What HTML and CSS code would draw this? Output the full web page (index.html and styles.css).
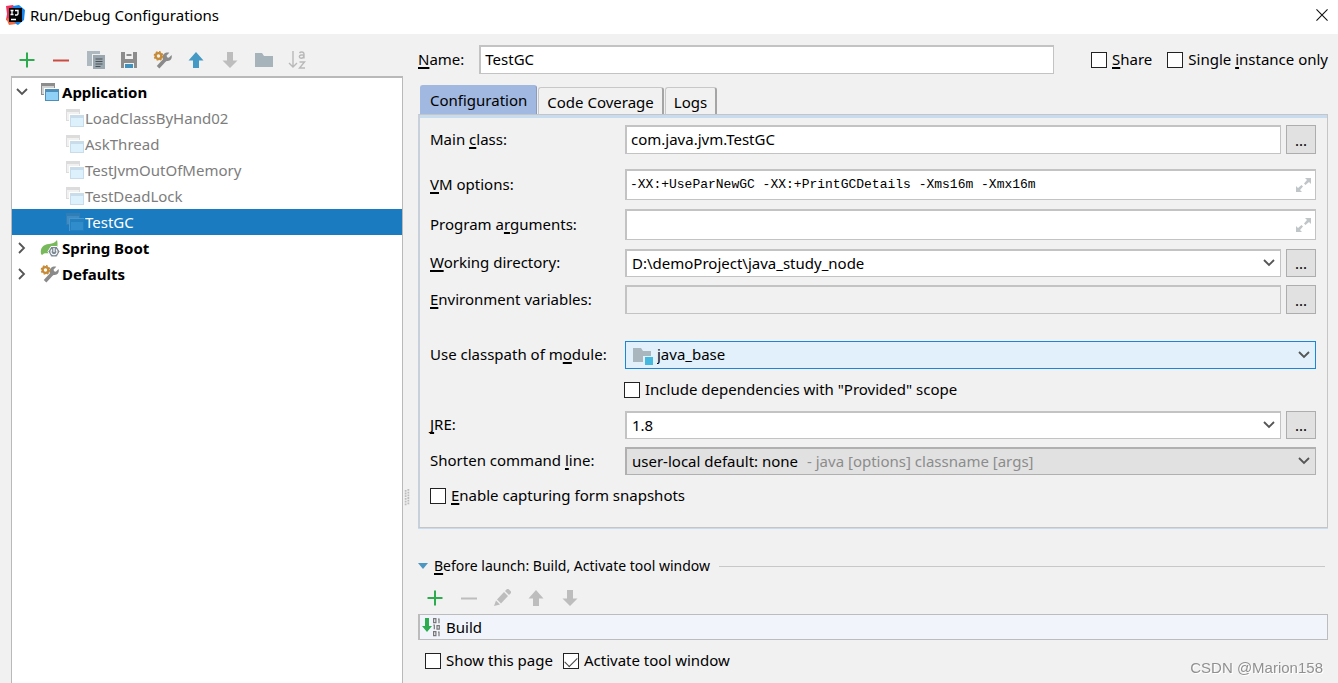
FILE: index.html
```html
<!DOCTYPE html>
<html lang="en">
<head>
<meta charset="utf-8">
<title>Run/Debug Configurations</title>
<link rel="stylesheet" href="styles.css">
</head>
<body>
<svg class="defs" aria-hidden="true">
  <symbol id="plus" viewBox="0 0 18 18"><path d="M9 1.500v15M1.500 9h15" stroke="#2cab4f" stroke-width="2"/></symbol>
  <symbol id="minus" viewBox="0 0 18 18"><path d="M1 9.500h16" stroke="currentColor" stroke-width="2"/></symbol>
  <symbol id="up" viewBox="0 0 18 18"><path d="M8 1l7.500 8.500H11V17H5V9.500H.5z" fill="currentColor"/></symbol>
  <symbol id="down" viewBox="0 0 18 18"><path d="M8 17L.5 9.500H5V1h6v8.500h4.500z" fill="currentColor"/></symbol>
  <symbol id="app" viewBox="0 0 18 18">
    <path d="M0 0h14v12H0z" fill="#8d8d8d"/><path d="M1 3h12v8H1z" fill="#d2d2d2"/>
    <path d="M3 5h15v13H3z" fill="#fff"/><path d="M4 6h14v12H4z" fill="#4d8fb8"/><path d="M5 9h12v8H5z" fill="#90d2f7"/>
  </symbol>
  <symbol id="wrench" viewBox="0 0 20 20">
    <path d="M4.500 18l8-8.500" stroke="#8a8a8a" stroke-width="4"/>
    <path d="M17 2l-3 3 .5 2 2 .5 3-3c1.200 4-1.500 7-5 6.500l-2 .5-3-3 .5-2C9.500 3.500 13 1 17 2z" fill="#8a8a8a"/>
    <circle cx="5" cy="5.500" r="3.200" fill="none" stroke="#c78a35" stroke-width="2.600"/>
    <circle cx="5" cy="5.500" r="4.700" fill="none" stroke="#c78a35" stroke-width="1.400" stroke-dasharray="2 1.690"/>
  </symbol>
  <symbol id="chev" viewBox="0 0 12 8"><path d="M1 1l5 5 5-5" fill="none" stroke="#555" stroke-width="1.800"/></symbol>
  <symbol id="expand" viewBox="0 0 16 16"><path d="M9 1h6v6l-2-2-3.500 3L8 6.500 11 3zM0 9l2 2 3.500-3L7 9.500 4 13l2 2H0z" fill="#c0c5c8"/></symbol>
</svg>

<header class="titlebar">
  <svg class="logo" viewBox="0 0 20 20" aria-hidden="true">
    <path d="M1 1l7-1 4 6-3 13-8-4 1-6z" fill="#f0325f"/><path d="M8 1l6-1 6 5-1 10-6 5-6-3z" fill="#1685ee"/><path d="M1 13l6 1 4 5-7 1z" fill="#f06b43"/>
    <path d="M4 3h13v14H4z" fill="#050505"/><path d="M5.500 5.500h3M7 5v4.500M5.500 9.500h3M10 5.500h3v3.500l-1 1h-2M6 14.500h5" fill="none" stroke="#fff" stroke-width="1.300"/>
  </svg>
  <h1>Run/Debug Configurations</h1>
  <button class="close" aria-label="Close"><svg viewBox="0 0 13 13"><path d="M.5.5l12 12M12.500.5l-12 12" stroke="#111" stroke-width="1.200"/></svg></button>
</header>

<main class="dialog">
  <aside class="side">
    <div class="toolbar side-tools">
      <button aria-label="Add"><svg><use href="#plus"/></svg></button>
      <button class="red" aria-label="Remove"><svg><use href="#minus"/></svg></button>
      <button aria-label="Copy"><svg viewBox="0 0 18 18"><path d="M1 0h13v15H1z" fill="#adb8bf"/><path d="M6 3h13v15H6z" fill="#f1f1f1"/><path d="M7 4h12v14H7z" fill="#9ba7af"/><path d="M9.500 8h7M9.500 10.500h7M9.500 13h7M9.500 15.500h5" stroke="#4b5257" stroke-width="1.200"/></svg></button>
      <button aria-label="Save"><svg viewBox="0 0 18 18"><path d="M1 1h16v16H1z" fill="#8c8c8c"/><path d="M5 1h8v7H5z" fill="#f1f1f1"/><path d="M6.500 4h5" stroke="#8c8c8c" stroke-width="2"/><path d="M4 12h10v5H4z" fill="#f1f1f1"/><path d="M5 13h8v4H5z" fill="#4191bd"/></svg></button>
      <button aria-label="Edit defaults"><svg><use href="#wrench"/></svg></button>
      <button class="blue" aria-label="Move up"><svg><use href="#up"/></svg></button>
      <button class="grey" aria-label="Move down"><svg><use href="#down"/></svg></button>
      <button aria-label="New folder"><svg viewBox="0 0 18 18"><path d="M-1 2h7l2 3h9v11H-1z" fill="#a7b3ba"/></svg></button>
      <button aria-label="Sort alphabetically"><svg viewBox="0 0 18 18"><path d="M3 0v16M-1 12l4 4 4-4" fill="none" stroke="#b9b9b9" stroke-width="1.400"/><path d="M9.500 2c1-1.500 4.500-1.500 4.500 1v4.500M14 4h-3c-2.500.5-2 3.200 0 3.200s3-1.500 3-3.200M9.500 11h5l-5 6h5.500" fill="none" stroke="#b9b9b9" stroke-width="1.400"/></svg></button>
    </div>
    <ul class="tree" role="tree">
      <li class="node group" role="treeitem" aria-expanded="true"><svg class="twist"><use href="#chev"/></svg><svg class="ico"><use href="#app"/></svg>Application</li>
      <li class="node leaf" role="treeitem"><svg class="ico"><use href="#app"/></svg>LoadClassByHand02</li>
      <li class="node leaf" role="treeitem"><svg class="ico"><use href="#app"/></svg>AskThread</li>
      <li class="node leaf" role="treeitem"><svg class="ico"><use href="#app"/></svg>TestJvmOutOfMemory</li>
      <li class="node leaf" role="treeitem"><svg class="ico"><use href="#app"/></svg>TestDeadLock</li>
      <li class="node leaf selected" role="treeitem" aria-selected="true"><svg class="ico"><use href="#app"/></svg>TestGC</li>
      <li class="node group" role="treeitem" aria-expanded="false"><svg class="twist closed"><use href="#chev"/></svg><svg class="ico" viewBox="0 0 18 18"><path d="M16 1c1 4 1 9-3 11.500-4 2.500-7 1.500-10 2L1 16l-1-1C-1 9 2 5.500 8 5c4-.5 6.500-1.500 8-4z" fill="#78b95c"/><path d="M10 7.500h6l3 5-3 5.500h-6l-3-5.500z" fill="#7d8a96" stroke="#fff"/><path d="M11 10.500a3 3 0 1 0 4 0M13 9v4" fill="none" stroke="#fff" stroke-width="1.200"/></svg>Spring Boot</li>
      <li class="node group" role="treeitem" aria-expanded="false"><svg class="twist closed"><use href="#chev"/></svg><svg class="ico"><use href="#wrench"/></svg>Defaults</li>
    </ul>
  </aside>

  <div class="splitter"><svg viewBox="0 0 6 20"><path d="M1.500 1v18M4.500 0v18" stroke="#bdbdbd" stroke-width="2" stroke-dasharray="2 1"/></svg></div>

  <section class="editor">
    <div class="name-row">
      <label class="text-label" for="name"><u>N</u>ame:</label>
      <input class="field name" id="name" type="text" value="TestGC">
      <label class="check"><input type="checkbox"><span><u>S</u>hare</span></label>
      <label class="check"><input type="checkbox"><span>Single <u>i</u>nstance only</span></label>
    </div>

    <div class="tabs" role="tablist">
      <button class="tab active" role="tab" aria-selected="true">Configuration</button>
      <button class="tab" role="tab">Code Coverage</button>
      <button class="tab" role="tab">Logs</button>
    </div>

    <form class="panel">
      <div class="row after-lg">
        <label class="text-label" for="main">Main <u>c</u>lass:</label>
        <div class="control"><input class="field" id="main" type="text" value="com.java.jvm.TestGC"><button type="button" class="more" aria-label="Browse class">...</button></div>
      </div>
      <div class="row after-sm">
        <label class="text-label" for="vm"><u>V</u>M options:</label>
        <div class="control"><input class="field tall code" id="vm" type="text" value="-XX:+UseParNewGC -XX:+PrintGCDetails -Xms16m -Xmx16m"><svg class="over expand"><use href="#expand"/></svg></div>
      </div>
      <div class="row after-sm">
        <label class="text-label" for="args">Program a<u>r</u>guments:</label>
        <div class="control"><input class="field tall code" id="args" type="text"><svg class="over expand"><use href="#expand"/></svg></div>
      </div>
      <div class="row">
        <label class="text-label" for="wd"><u>W</u>orking directory:</label>
        <div class="control"><div class="combo"><select class="field" id="wd"><option>D:\demoProject\java_study_node</option></select><svg class="over arrow"><use href="#chev"/></svg></div><button type="button" class="more" aria-label="Browse directory">...</button></div>
      </div>
      <div class="row after-xl">
        <label class="text-label" for="env"><u>E</u>nvironment variables:</label>
        <div class="control"><input class="field flat" id="env" type="text" readonly><button type="button" class="more" aria-label="Edit variables">...</button></div>
      </div>
      <div class="row after-md">
        <label class="text-label" for="module">Use classpath of m<u>o</u>dule:</label>
        <div class="control"><div class="combo"><select class="field focus" id="module"><option>java_base</option></select>
          <svg class="over module-icon" viewBox="0 0 20 18"><path d="M0 1h8l2 3h8v11H0z" fill="#a9b6bd"/><path d="M10 9h10v9H10z" fill="#e1f0fa"/><path d="M12 10h8v8h-8z" fill="#45b8e0"/></svg>
          <svg class="over arrow"><use href="#chev"/></svg></div></div>
      </div>
      <label class="check indent after-md"><input type="checkbox"><span>Include dependencies with "Provided" scope</span></label>
      <div class="row">
        <label class="text-label" for="jre"><u>J</u>RE:</label>
        <div class="control"><div class="combo"><select class="field" id="jre"><option>1.8</option></select><svg class="over arrow"><use href="#chev"/></svg></div><button type="button" class="more" aria-label="Browse JRE">...</button></div>
      </div>
      <div class="row after-md">
        <label class="text-label" for="shorten">Shorten command <u>l</u>ine:</label>
        <div class="control"><div class="combo"><select class="field grey-field" id="shorten"><option>user-local default: none</option></select><span class="over hint">- java [options] classname [args]</span><svg class="over arrow"><use href="#chev"/></svg></div></div>
      </div>
      <label class="check"><input type="checkbox"><span><u>E</u>nable capturing form snapshots</span></label>
    </form>

    <section class="before">
      <h2><svg class="tri" viewBox="0 0 10 6"><path d="M0 0h10L5 6z" fill="#4c97c2"/></svg><span><u>B</u>efore launch: Build, Activate tool window</span></h2>
      <div class="toolbar grey">
        <button aria-label="Add task"><svg><use href="#plus"/></svg></button>
        <button aria-label="Remove task"><svg><use href="#minus"/></svg></button>
        <button aria-label="Edit task"><svg viewBox="0 0 18 18"><path d="M0 17l2-5.500 4 4zM3 10.500l7-7.500 4 4-7 7.500zM11 2l2-2h1.500L17 2.500V4l-2 2z" fill="#bdbdbd"/></svg></button>
        <button aria-label="Move task up"><svg><use href="#up"/></svg></button>
        <button aria-label="Move task down"><svg><use href="#down"/></svg></button>
      </div>
      <ul class="tasks"><li><svg class="build" viewBox="0 0 19 20"><path d="M3 1h4v8h3l-5 6-5-6h3z" fill="#2cab4f"/><g fill="none" stroke="#777" stroke-width="1.200"><path d="M11.600 1.600h2.300v4h-2.300zM16 2h1v4.200M11.300 8h1v4.200M15 8.600h2.300v3.500H15zM11.600 14.600h2.300v4h-2.300zM16 15h1v4.200"/></g></svg>Build</li></ul>
      <div class="footer">
        <label class="check"><input type="checkbox"><span>Show this page</span></label>
        <label class="check"><input type="checkbox" checked><span>Activate tool window</span></label>
      </div>
    </section>
  </section>
</main>
<div class="watermark">CSDN @Marion158</div>
</body>
</html>
```
FILE: styles.css
```css
* { box-sizing: border-box; }
body {
  margin: 0;
  height: 100vh;
  display: flex;
  flex-direction: column;
  overflow: hidden;
  background: #f1f1f1;
  color: #000;
  font: 15px/20px "Noto Sans", "Open Sans", sans-serif;
}
.defs { position: absolute; width: 0; height: 0; }
button, input, select { font: inherit; color: inherit; margin: 0; padding: 0; }
button { border: 0; background: none; }
svg { flex: none; overflow: visible; }
symbol { overflow: visible; }
u { text-decoration-thickness: 2px; text-underline-offset: 2px; text-decoration-skip-ink: none; }

.titlebar { display: flex; align-items: center; gap: 5px; height: 34px; flex: none; padding: 0 10px 4px 5px; background: #fff; }
.titlebar h1 { margin: 0; flex: 1; font-size: 15px; font-weight: 400; }
.logo { width: 20px; height: 20px; }
.close svg { display: block; width: 12px; height: 12px; }

.dialog { flex: 1; min-height: 0; display: flex; padding: 0 10px 0 11px; }
.side { flex: 0 0 392px; display: flex; flex-direction: column; }
.toolbar { display: flex; gap: 16px; }
.toolbar svg { display: block; width: 18px; height: 18px; }
.side-tools { padding: 17px 7px 7px; }
.red { color: #cb4b43; }
.blue { color: #459ac5; }
.grey { color: #bdbdbd; }

.tree { flex: 1; margin: 0; padding: 1px 0 0; list-style: none; background: #fff; border: 1px solid #b9b9b9; border-top-width: 2px; border-bottom: 0; }
.node { display: flex; align-items: center; height: 26px; padding-bottom: 1px; }
.group { padding-left: 4px; gap: 3px; font-weight: 700; }
.leaf { padding-left: 54px; gap: 1px; color: #7d7d7d; }
.twist { width: 12px; height: 8px; margin-right: 10px; }
.closed { transform: rotate(-90deg); }
.ico { width: 18px; height: 18px; }
.leaf .ico { opacity: .3; }
.node.selected { background: #1a7bc1; color: #fff; }
.selected .ico { opacity: .2; }

.splitter { flex: 0 0 15px; padding: 455px 0 0 1px; }
.splitter svg { width: 6px; height: 18px; }

.editor { flex: 1; min-width: 0; padding-top: 11px; }
.name-row { display: flex; align-items: center; gap: 15px; margin-bottom: 11px; }
.name { margin-right: 22px; }
.text-label { padding-bottom: 2px; }
.field { flex: 1; width: 100%; min-width: 0; height: 29px; padding: 0 4px 2px; background: #fff; border: 2px solid #c3c3c3; border-width: 2px 1px 1px 2px; border-radius: 0; outline: 0; appearance: none; }
.check { display: flex; align-items: center; gap: 5px; white-space: nowrap; height: 16px; }
.check span { padding-bottom: 2px; }
.check input { appearance: none; flex: none; width: 16px; height: 16px; border: 1px solid #222; background: #fff; display: grid; place-items: center; }
.check input:checked::before { content: ""; width: 11px; height: 6px; border: solid #444; border-width: 0 0 1px 1px; rotate: -45deg; translate: 0 -1px; }

.tabs { display: flex; align-items: flex-end; gap: 1px; padding-left: 2px; }
.tab { height: 27px; padding: 2px 8px 0; border: 1px solid #c8c8c8; border-right: 2px solid #a5a5a5; border-bottom: 0; border-radius: 3px 3px 0 0; }
.tab.active { height: 29px; padding: 0 9px 1px; background: #a1b8e0; border-color: #a1b8e0; border-right: 1px solid #8b9bb9; }
.panel { padding: 10px 11px 23px 10px; border: 1px solid #c5c5c5; border-left: 2px solid #c8d0dc; box-shadow: inset 0 3px #c8dcf0, 0 1px #c8dcf0; }
.row { display: grid; grid-template-columns: 195px 1fr; align-items: center; margin-bottom: 8px; }
.after-sm { margin-bottom: 9px; }
.after-md { margin-bottom: 13px; }
.after-lg { margin-bottom: 15px; }
.after-xl { margin-bottom: 27px; }
.control { position: relative; display: flex; gap: 5px; min-width: 0; }
.combo { position: relative; display: flex; flex: 1; min-width: 0; }
.combo .field { height: 28px; padding-left: 5px; }
.control .tall { height: 31px; }
.control .code { padding: 0 3px 1px; font-family: "Liberation Mono", monospace; font-size: 13px; }
.control .flat { background: #f1f1f1; }
.combo .focus { background: #e1f0fa; border: 1px solid #1a86d8; padding-left: 31px; }
.control .grey-field { background: #e1e1e1; border-color: #b0b0b0; }
.more { flex: 0 0 30px; border: 1px solid #adadad; background: #e1e1e1; }
.over { position: absolute; pointer-events: none; }
.expand { width: 16px; height: 16px; top: 8px; right: 4px; }
.arrow { width: 12px; height: 8px; top: 10px; right: 6px; }
.module-icon { width: 20px; height: 18px; top: 6px; left: 8px; }
.hint { left: 182px; top: 4px; color: #8c8c8c; }
.indent { margin-left: 194px; }

.before { padding-top: 28px; }
.before h2 { display: flex; align-items: center; gap: 6px; margin: 0 3px 13px 0; font-size: 14px; font-weight: 400; }
.before h2::after { content: ""; flex: 1; height: 1px; margin-left: 3px; background: #c8c8c8; }
.tri { width: 10px; height: 6px; }
.before .toolbar { padding: 0 8px; }
.tasks { margin: 7px 0 0; padding: 0; list-style: none; border: 1px solid #bcbcbc; border-left-width: 2px; background: #f1f5fb; }
.tasks li { display: flex; align-items: center; gap: 5px; height: 24px; padding-left: 2px; }
.build { width: 19px; height: 20px; }
.footer { display: flex; gap: 10px; padding: 13px 7px; }

.watermark { position: fixed; right: 15px; bottom: 6px; font: 15px/18px "Liberation Sans", sans-serif; color: #909090; text-shadow: 1px 1px #fff; }
```
